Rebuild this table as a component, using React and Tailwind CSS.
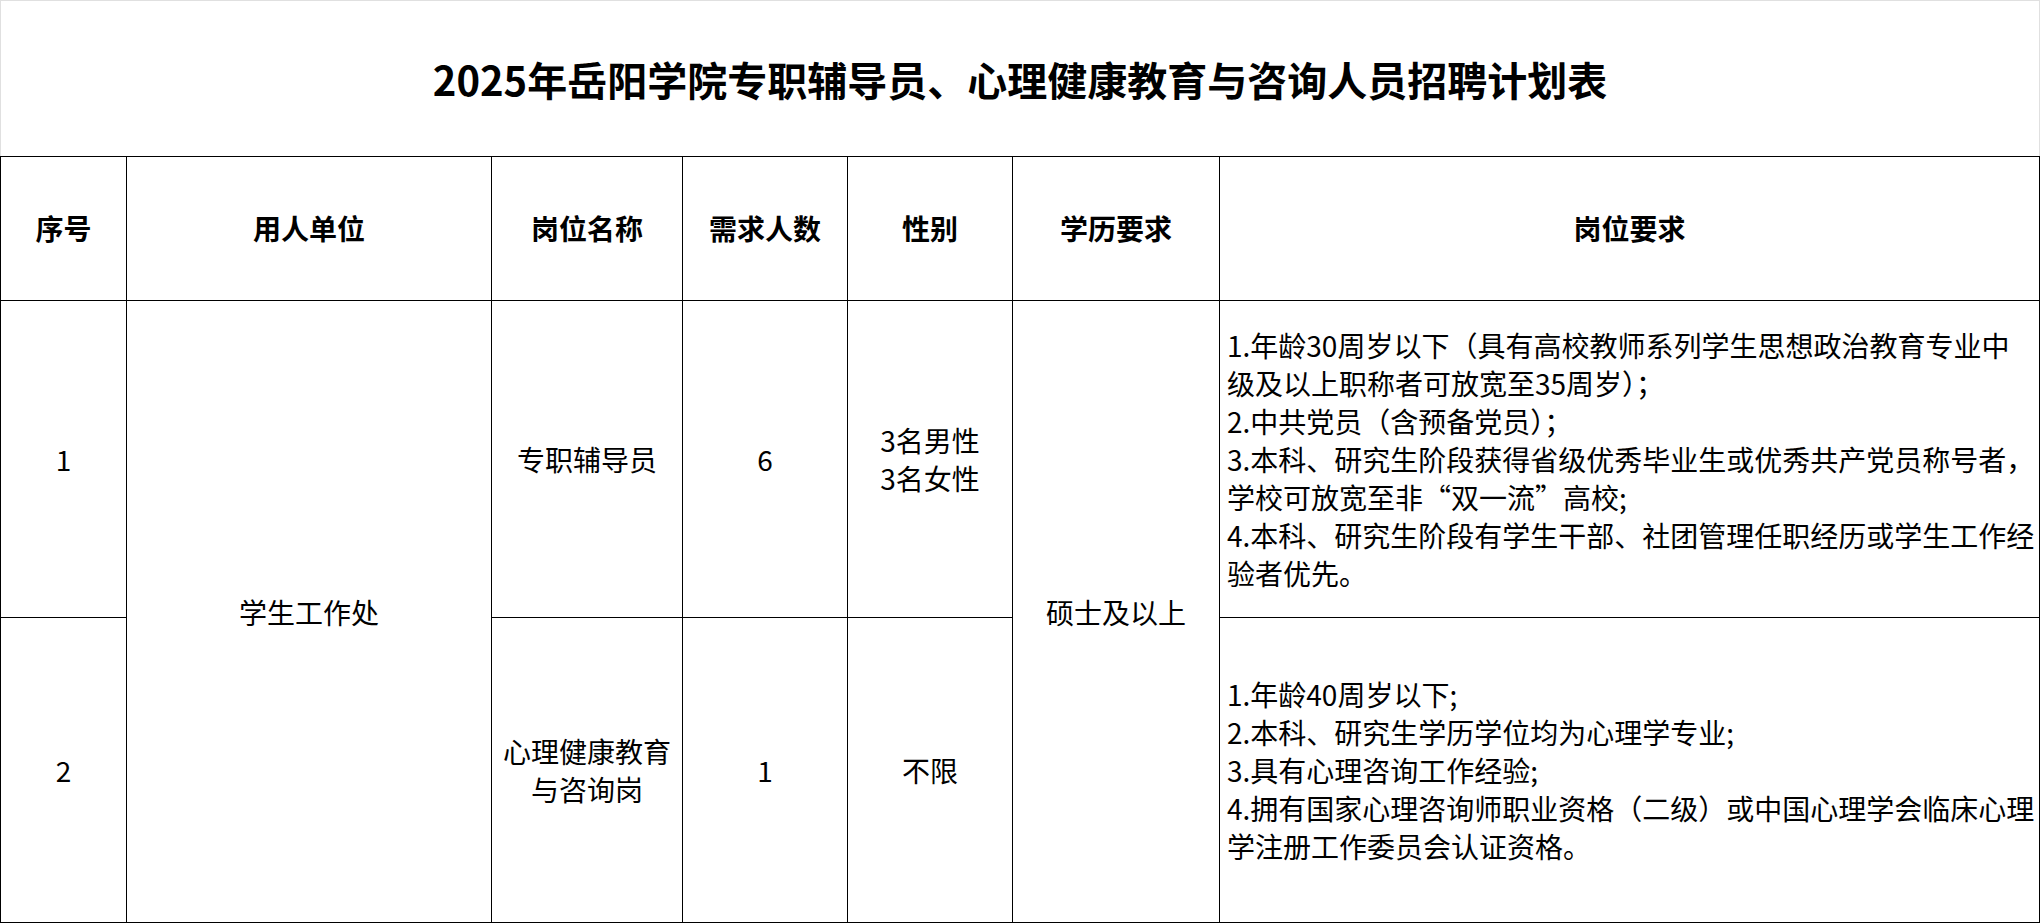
import React from "react";

const Cell = ({ className = "", children }) => (
  <div className={"bg-white flex items-center justify-center text-center text-[28px] leading-[38px] " + className}>
    {children}
  </div>
);

const Lines = ({ lines }) => (
  <div className="flex flex-col items-start text-left">
    {lines.map((l, i) => (
      <div key={i} className="whitespace-nowrap">{l}</div>
    ))}
  </div>
);

export default function App() {
  return (
    <div className="w-[2041px] h-[923px] bg-white text-black font-['Noto_Sans_CJK_SC','Noto_Sans',sans-serif]">
      <div className="w-[2040px] h-[156px] border-t border-l border-r border-[#e0e0e0] flex items-center justify-center">
        <h1 className="text-[40px] font-bold whitespace-nowrap">
          2025年岳阳学院专职辅导员、心理健康教育与咨询人员招聘计划表
        </h1>
      </div>
      <div className="w-[2040px] h-[767px] bg-black p-px gap-px grid grid-cols-[125px_364px_190px_164px_164px_206px_819px] grid-rows-[143px_316px_304px]">
        <Cell className="font-bold pb-[2px]">序号</Cell>
        <Cell className="font-bold pb-[2px]">用人单位</Cell>
        <Cell className="font-bold pb-[2px]">岗位名称</Cell>
        <Cell className="font-bold pb-[2px]">需求人数</Cell>
        <Cell className="font-bold pb-[2px]">性别</Cell>
        <Cell className="font-bold pb-[2px]">学历要求</Cell>
        <Cell className="font-bold pb-[2px]">岗位要求</Cell>

        <Cell>1</Cell>
        <Cell className="row-span-2">学生工作处</Cell>
        <Cell>专职辅导员</Cell>
        <Cell>6</Cell>
        <Cell>
          <div className="flex flex-col">
            <span>3名男性</span>
            <span>3名女性</span>
          </div>
        </Cell>
        <Cell className="row-span-2">硕士及以上</Cell>
        <Cell className="!justify-start pl-[7px]">
          <Lines
            lines={[
              "1.年龄30周岁以下（具有高校教师系列学生思想政治教育专业中",
              "级及以上职称者可放宽至35周岁）；",
              "2.中共党员（含预备党员）；",
              "3.本科、研究生阶段获得省级优秀毕业生或优秀共产党员称号者，",
              "学校可放宽至非“双一流”高校;",
              "4.本科、研究生阶段有学生干部、社团管理任职经历或学生工作经",
              "验者优先。",
            ]}
          />
        </Cell>

        <Cell>2</Cell>
        <Cell>
          <div className="flex flex-col">
            <span>心理健康教育</span>
            <span>与咨询岗</span>
          </div>
        </Cell>
        <Cell>1</Cell>
        <Cell>不限</Cell>
        <Cell className="!justify-start pl-[7px]">
          <Lines
            lines={[
              "1.年龄40周岁以下;",
              "2.本科、研究生学历学位均为心理学专业;",
              "3.具有心理咨询工作经验;",
              "4.拥有国家心理咨询师职业资格（二级）或中国心理学会临床心理",
              "学注册工作委员会认证资格。",
            ]}
          />
        </Cell>
      </div>
    </div>
  );
}
